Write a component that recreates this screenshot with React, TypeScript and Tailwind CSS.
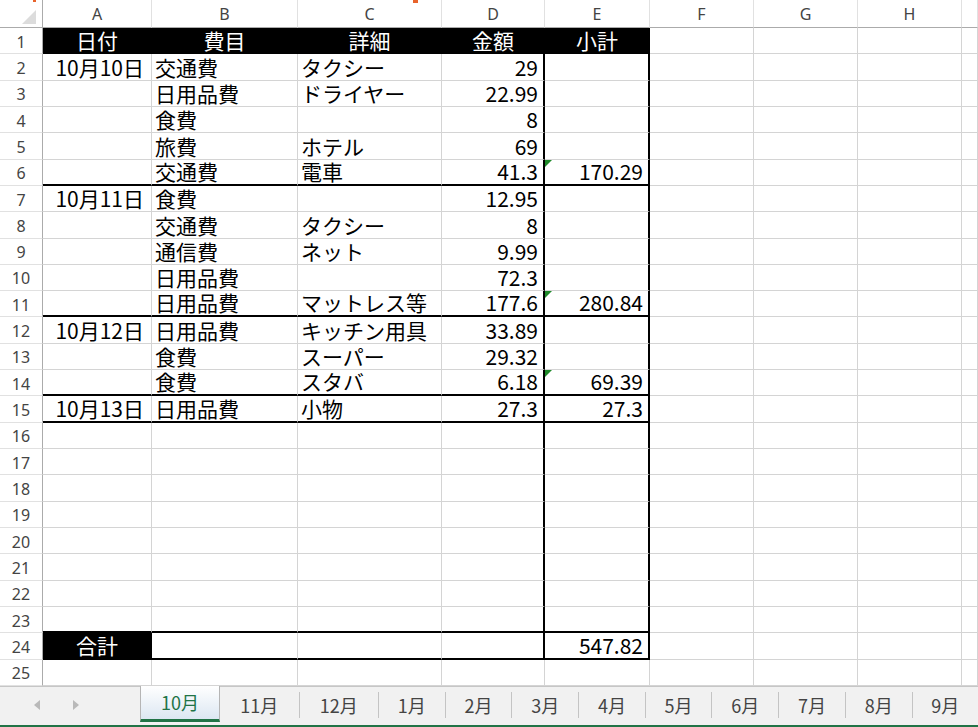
type Entry = {
  date?: string;
  cat?: string;
  note?: string;
  amt?: string;
  sub?: string;
  flag?: boolean;
};

const entries: Record<number, Entry> = {
  2: { date: "10月10日", cat: "交通費", note: "タクシー", amt: "29" },
  3: { cat: "日用品費", note: "ドライヤー", amt: "22.99" },
  4: { cat: "食費", amt: "8" },
  5: { cat: "旅費", note: "ホテル", amt: "69" },
  6: { cat: "交通費", note: "電車", amt: "41.3", sub: "170.29", flag: true },
  7: { date: "10月11日", cat: "食費", amt: "12.95" },
  8: { cat: "交通費", note: "タクシー", amt: "8" },
  9: { cat: "通信費", note: "ネット", amt: "9.99" },
  10: { cat: "日用品費", amt: "72.3" },
  11: { cat: "日用品費", note: "マットレス等", amt: "177.6", sub: "280.84", flag: true },
  12: { date: "10月12日", cat: "日用品費", note: "キッチン用具", amt: "33.89" },
  13: { cat: "食費", note: "スーパー", amt: "29.32" },
  14: { cat: "食費", note: "スタバ", amt: "6.18", sub: "69.39", flag: true },
  15: { date: "10月13日", cat: "日用品費", note: "小物", amt: "27.3", sub: "27.3" },
};

const headings = ["日付", "費目", "詳細", "金額", "小計"];
const letters = ["A", "B", "C", "D", "E", "F", "G", "H", ""];
const thickBottom = new Set([6, 11, 14, 15, 23, 24]);
const rows = Array.from({ length: 25 }, (_, i) => i + 1);
const months = ["11月", "12月", "1月", "2月", "3月", "4月", "5月", "6月", "7月", "8月", "9月"];

const jp = "font-['Noto_Sans_CJK_JP',sans-serif]";

function cellText(r: number, c: number): string | undefined {
  if (r === 1 && c <= 4) return headings[c];
  if (r === 24 && c === 0) return "合計";
  if (r === 24 && c === 4) return "547.82";
  const e = entries[r];
  if (!e) return undefined;
  return [e.date, e.cat, e.note, e.amt, e.sub][c];
}

function Cell({ r, c }: { r: number; c: number }) {
  const table = c <= 4;
  const boxed = r >= 2 && r <= 24;
  const dark = (r === 1 && table) || (r === 24 && c === 0);

  let right = "border-r border-r-[#d4d4d4]";
  if (dark) right = "border-r border-r-black";
  if (boxed && (c === 3 || c === 4)) right = "border-r-2 border-r-black";

  let bottom = "border-b border-b-[#d4d4d4]";
  if (dark) bottom = "border-b border-b-black";
  if (table && thickBottom.has(r)) bottom = "border-b-2 border-b-black";

  let align = "justify-start pl-[3px]";
  if (c === 0) align = "justify-end pr-[7px]";
  if (c === 3 || c === 4) align = "justify-end pr-[5px]";
  if (dark) align = "justify-center";

  const text = cellText(r, c);
  const flag = c === 4 && entries[r]?.flag;

  return (
    <div
      className={`relative flex items-end pb-[2px] ${right} ${bottom} ${align} ${
        dark ? "bg-black text-white" : "bg-white text-black"
      }`}
    >
      {flag && (
        <span className="absolute left-0 top-0 w-0 h-0 border-t-[7px] border-t-[#1f8a2a] border-r-[7px] border-r-transparent" />
      )}
      {text && <span className={`${jp} text-[21px] leading-[22px] whitespace-nowrap`}>{text}</span>}
    </div>
  );
}

function Sheet() {
  return (
    <div className="grid grid-cols-[43px_109px_146px_144px_103px_105px_104px_104px_104px_16px] grid-rows-[28px_repeat(25,26.32px)] font-['Noto_Sans',sans-serif]">
      {/* corner */}
      <div className="relative bg-white border-r border-r-[#ababab] border-b border-b-[#ababab]">
        <span className="absolute right-[6px] bottom-[3px] w-0 h-0 border-b-[14px] border-b-[#dcdcdc] border-l-[14px] border-l-transparent" />
        <span className="absolute left-[33px] top-0 w-[3px] h-[2px] bg-[#e8632b]" />
      </div>
      {letters.map((l, i) => (
        <div
          key={l + i}
          className="relative flex items-center justify-center bg-white text-[16px] text-[#444] border-r border-r-[#e1e1e1] border-b border-b-[#ababab]"
        >
          {l}
          {i === 2 && <span className="absolute left-[115px] top-0 w-[5px] h-[3px] bg-[#e8632b]" />}
        </div>
      ))}
      {rows.map((r) => (
        <div key={r} className="contents">
          <div className="flex items-center justify-center pt-[2px] bg-white text-[16px] text-[#444] border-r border-r-[#ababab] border-b border-b-[#e1e1e1]">
            {r}
          </div>
          {letters.map((_, c) => (
            <Cell key={c} r={r} c={c} />
          ))}
        </div>
      ))}
    </div>
  );
}

function Tabs() {
  return (
    <div className="flex h-[41px] bg-[#f1f1f1] border-t border-t-[#c6c6c6] border-b-2 border-b-[#217346]">
      <div className="w-[140px] shrink-0 flex items-center gap-[33px] pl-[34px] pb-[2px]">
        <span className="w-0 h-0 border-y-[5px] border-y-transparent border-r-[6px] border-r-[#b9b9b9]" />
        <span className="w-0 h-0 border-y-[5px] border-y-transparent border-l-[6px] border-l-[#b9b9b9]" />
      </div>
      <div className="w-[80px] shrink-0 -mt-px h-[36px] flex items-center justify-center bg-gradient-to-b from-white to-[#dce7f2] border-x border-x-[#b5b5b5] border-b-[3px] border-b-[#217346]">
        <span className={`${jp} text-[18px] text-[#217346] leading-[20px]`}>10月</span>
      </div>
      {months.map((m, i) => (
        <div
          key={m}
          className={`${i < 2 ? "w-[79.5px]" : "w-[66.7px]"} shrink-0 flex items-center justify-end h-[36px]`}
        >
          <span className={`${jp} flex-1 text-center text-[18px] text-[#444] leading-[20px]`}>{m}</span>
          <span className="w-px h-[26px] bg-[#c4c4c4]" />
        </div>
      ))}
    </div>
  );
}

export default function App() {
  return (
    <div className="w-[978px] h-[727px] overflow-hidden bg-white">
      <Sheet />
      <Tabs />
    </div>
  );
}
